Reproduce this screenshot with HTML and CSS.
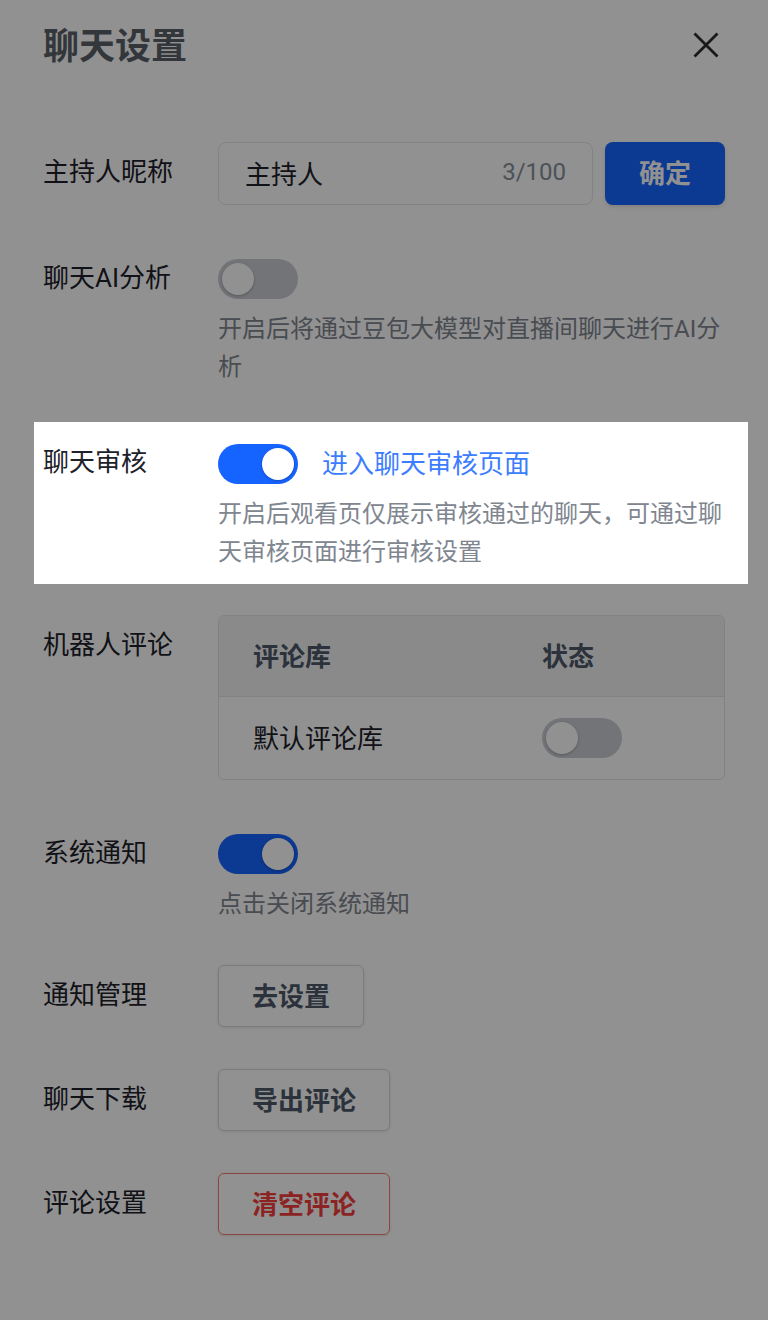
FILE: index.html
```html
<!DOCTYPE html>
<html>
<head>
    <meta charset="utf-8">
    <title>聊天设置</title>
    <link rel="stylesheet" href="styles.css">
</head>
<body>
    <div class="panel">
        <div class="header">
            <h1 class="title">聊天设置</h1>
            <button class="close" aria-label="关闭">
                <svg width="26" height="26" viewBox="0 0 26 26">
                    <path d="M1.5 1.5 L24.5 24.5 M24.5 1.5 L1.5 24.5" stroke="#2b2d31" stroke-width="2.8" fill="none"/>
                </svg>
            </button>
        </div>

        <div class="form">
            <div class="row row-wide">
                <div class="label">主持人昵称</div>
                <div class="control name-field">
                    <div class="input">
                        <span class="input-text">主持人</span>
                        <span class="input-count">3/100</span>
                    </div>
                    <button class="btn-primary">确定</button>
                </div>
            </div>

            <div class="row row-switch row-before-highlight">
                <div class="label">聊天AI分析</div>
                <div class="control">
                    <div class="switch"><span class="knob"></span></div>
                    <div class="desc">开启后将通过豆包大模型对直播间聊天进行AI分析</div>
                </div>
            </div>

            <div class="row row-switch row-highlight">
                <div class="label">聊天审核</div>
                <div class="control">
                    <div class="switch-line">
                        <div class="switch on"><span class="knob"></span></div>
                        <a class="link">进入聊天审核页面</a>
                    </div>
                    <div class="desc">开启后观看页仅展示审核通过的聊天，可通过聊天审核页面进行审核设置</div>
                </div>
            </div>

            <div class="row row-wide">
                <div class="label">机器人评论</div>
                <div class="control">
                    <div class="table">
                        <div class="table-head">
                            <div class="cell">评论库</div>
                            <div class="cell">状态</div>
                        </div>
                        <div class="table-row">
                            <div class="cell">默认评论库</div>
                            <div class="cell"><div class="switch"><span class="knob"></span></div></div>
                        </div>
                    </div>
                </div>
            </div>

            <div class="row row-switch">
                <div class="label">系统通知</div>
                <div class="control">
                    <div class="switch on"><span class="knob"></span></div>
                    <div class="desc">点击关闭系统通知</div>
                </div>
            </div>

            <div class="row">
                <div class="label">通知管理</div>
                <div class="control"><button class="btn">去设置</button></div>
            </div>

            <div class="row">
                <div class="label">聊天下载</div>
                <div class="control"><button class="btn">导出评论</button></div>
            </div>

            <div class="row">
                <div class="label">评论设置</div>
                <div class="control"><button class="btn btn-danger">清空评论</button></div>
            </div>
        </div>
    </div>

    <div class="mask"></div>
</body>
</html>
```

FILE: styles.css
```css
body {
    margin: 0;
    background: #fff;
    color: #1d2129;
    font-family: Roboto, "Noto Sans CJK SC", sans-serif;
}
.panel {
    padding: 0 43px;
}
.header {
    height: 90px;
    display: flex;
    align-items: center;
    justify-content: space-between;
}
.title {
    margin: 0 0 4px;
    font-size: 36px;
    font-weight: bold;
    color: #5a5f68;
}
.close {
    width: 38px;
    height: 38px;
    padding: 0;
    border: none;
    background: none;
    display: flex;
    align-items: center;
    justify-content: center;
}
.form {
    padding-top: 52px;
}
.row {
    display: flex;
    margin-bottom: 42px;
}
.row-wide {
    margin-bottom: 54px;
}
.row-before-highlight {
    margin-bottom: 36px;
}
.label {
    width: 175px;
    flex-shrink: 0;
    font-size: 26px;
    line-height: 36px;
    padding-top: 12px;
}
.row-switch .label {
    padding-top: 1px;
}
.control {
    flex: 1;
    min-width: 0;
}
.row-highlight {
    position: relative;
    z-index: 2;
    background: #fff;
    margin: 0 -23px 31px -9px;
    padding: 21px 23px 13px 9px;
}

/* nickname */
.name-field {
    display: flex;
    gap: 12px;
}
.input {
    flex: 1;
    height: 63px;
    box-sizing: border-box;
    border: 1px solid #e5e6eb;
    border-radius: 8px;
    padding: 0 26px 3px;
    display: flex;
    align-items: center;
    justify-content: space-between;
}
.input-text {
    font-size: 26px;
}
.input-count {
    font-size: 24px;
    color: #86909c;
}
.btn-primary {
    width: 120px;
    height: 63px;
    padding: 0 0 4px;
    border: none;
    border-radius: 8px;
    background: #1664ff;
    color: #fff;
    font-family: inherit;
    font-size: 26px;
    font-weight: bold;
    box-shadow: 0 2px 4px rgba(0, 0, 0, 0.12);
}

/* switches */
.switch {
    width: 80px;
    height: 40px;
    box-sizing: border-box;
    padding: 4px;
    border-radius: 20px;
    background: #c9cdd4;
    display: flex;
    align-items: center;
}
.switch.on {
    background: #1664ff;
    justify-content: flex-end;
}
.knob {
    width: 32px;
    height: 32px;
    border-radius: 50%;
    background: #fff;
    box-shadow: 0 1px 3px rgba(0, 0, 0, 0.25);
}
.switch-line {
    display: flex;
    align-items: center;
    gap: 24px;
}
.link {
    font-size: 26px;
    color: #3c7dff;
    margin-bottom: 4px;
}
.desc {
    margin-top: 11px;
    font-size: 24px;
    line-height: 38px;
    color: #80868f;
}

/* robot comment table */
.table {
    border: 1px solid #e2e4e9;
    border-radius: 6px;
    overflow: hidden;
}
.table-head,
.table-row {
    display: grid;
    grid-template-columns: 289px 1fr;
    align-items: center;
}
.table-head {
    height: 81px;
    box-sizing: border-box;
    padding-bottom: 3px;
    background: #f2f3f5;
    border-bottom: 1px solid #e2e4e9;
    font-weight: bold;
    color: #4e5969;
}
.table-row {
    height: 82px;
}
.cell {
    padding-left: 34px;
    font-size: 26px;
}
.table-row .cell:first-child {
    padding-bottom: 3px;
}

/* buttons */
.btn {
    height: 62px;
    padding: 0 33px 4px;
    border: 1px solid #d6d9df;
    border-radius: 6px;
    background: #fff;
    color: #4e5969;
    font-family: inherit;
    font-size: 26px;
    font-weight: bold;
    box-shadow: 0 1px 3px rgba(0, 0, 0, 0.1);
}
.btn-danger {
    color: #f53f3f;
    border-color: #f77a76;
}

.mask {
    position: fixed;
    top: 0;
    left: 0;
    right: 0;
    bottom: 0;
    z-index: 1;
    background: rgba(0, 0, 0, 0.43);
}
```
